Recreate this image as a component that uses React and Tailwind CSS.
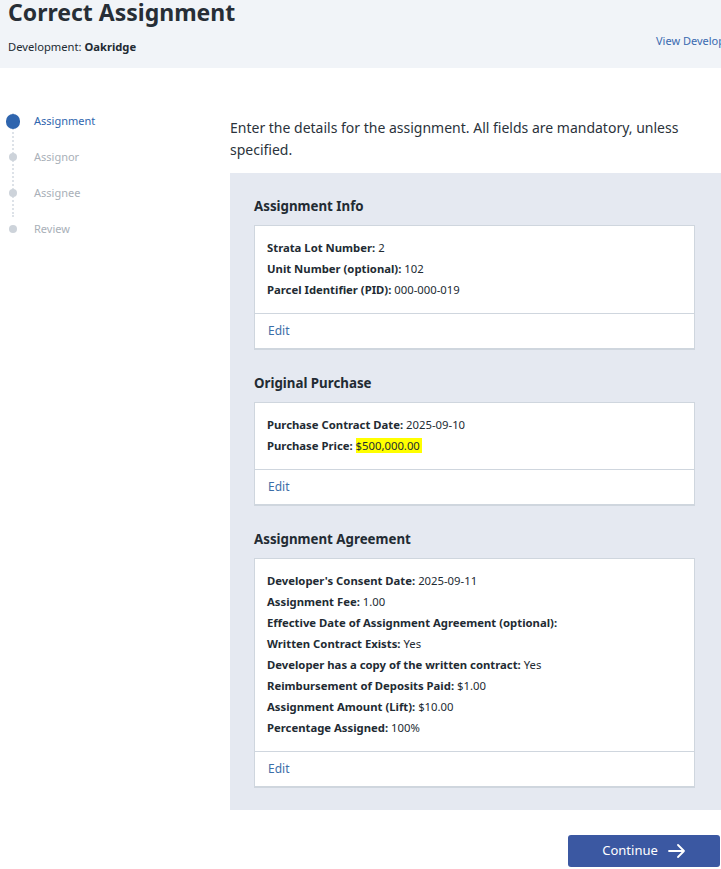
import React from "react";

const Row = ({ label, value, highlight }) => (
  <div className="leading-[21px]">
    <span className="font-bold">{label}</span>
    {value !== undefined && (
      <>
        {" "}
        <span className={highlight ? "bg-[#ffff00] pr-[2px]" : ""}>{value}</span>
      </>
    )}
  </div>
);

const Card = ({ title, rows }) => (
  <div>
    <h3 className="text-[13.3px] font-bold text-[#222b33] leading-[20px] mb-[9px]">{title}</h3>
    <div className="bg-white border border-[#cfd6de] shadow-[0_1px_0_#cfd6de]">
      <div className="px-[12px] pt-[11px] pb-[13px] text-[11.3px] text-[#222b33]">
        {rows.map((r, i) => (
          <Row key={i} {...r} />
        ))}
      </div>
      <div className="border-t border-[#cfd6de] px-[13px] pt-[9px] pb-[9px] text-[12px] leading-[16px] text-[#3d6ea8]">
        Edit
      </div>
    </div>
  </div>
);

export default function App() {
  const steps = ["Assignment", "Assignor", "Assignee", "Review"];
  return (
    <div
      className="w-[721px] h-[869px] overflow-hidden bg-white text-[#222b33]"
      style={{ fontFamily: '"Noto Sans", "Open Sans", sans-serif' }}
    >
      <header className="h-[68px] bg-[#f1f4f8] flex">
        <div className="pl-[8px] w-[656px] shrink-0">
          <h1 className="text-[23px] font-bold leading-[30px] mt-[-3px] text-[#272e36]">Correct Assignment</h1>
          <div className="text-[11.2px] mt-[11px] leading-[18px]">
            Development: <span className="font-bold">Oakridge</span>
          </div>
        </div>
        <a className="shrink-0 whitespace-nowrap text-[11px] text-[#3a6ab0] mt-[33px] leading-[16px]">View Development</a>
      </header>

      <div className="flex">
        <nav className="w-[230px] shrink-0 pt-[35px] pl-[6px]">
          <ol className="relative">
            <div className="absolute left-[6px] top-[10px] h-[104px] border-l-2 border-dotted border-[#dde2e8]" />
            {steps.map((s, i) => (
              <li key={s} className="relative flex items-center h-[36px]">
                <div className="w-[14px] flex justify-center shrink-0">
                  {i === 0 ? (
                    <span className="w-[15px] h-[15px] rounded-full bg-[#2f65ae]" />
                  ) : (
                    <span className="w-[8px] h-[8px] rounded-full bg-[#cdd3da]" />
                  )}
                </div>
                <span className={`ml-[14px] text-[11px] ${i === 0 ? "text-[#2f65ae]" : "text-[#a9b0b8]"}`}>{s}</span>
              </li>
            ))}
          </ol>
        </nav>

        <main className="flex-1 min-w-0 pt-[49px]">
          <p className="text-[14px] leading-[22px] text-[#2b333b] pr-[20px]">
            Enter the details for the assignment. All fields are mandatory, unless specified.
          </p>
          <section className="mt-[12px] bg-[#e5e9f1] pl-[24px] pr-[26px] pt-[23px] pb-[23px] flex flex-col gap-[24px]">
            <Card
              title="Assignment Info"
              rows={[
                { label: "Strata Lot Number:", value: "2" },
                { label: "Unit Number (optional):", value: "102" },
                { label: "Parcel Identifier (PID):", value: "000-000-019" },
              ]}
            />
            <Card
              title="Original Purchase"
              rows={[
                { label: "Purchase Contract Date:", value: "2025-09-10" },
                { label: "Purchase Price:", value: "$500,000.00", highlight: true },
              ]}
            />
            <Card
              title="Assignment Agreement"
              rows={[
                { label: "Developer's Consent Date:", value: "2025-09-11" },
                { label: "Assignment Fee:", value: "1.00" },
                { label: "Effective Date of Assignment Agreement (optional):" },
                { label: "Written Contract Exists:", value: "Yes" },
                { label: "Developer has a copy of the written contract:", value: "Yes" },
                { label: "Reimbursement of Deposits Paid:", value: "$1.00" },
                { label: "Assignment Amount (Lift):", value: "$10.00" },
                { label: "Percentage Assigned:", value: "100%" },
              ]}
            />
          </section>
          <div className="flex justify-end pt-[25px] pr-[1px]">
            <button className="w-[152px] h-[32px] rounded-[3px] bg-[#3b58a2] text-white text-[13px] flex items-center justify-center gap-[10px]">
              Continue
              <svg width="18" height="14" viewBox="0 0 18 14" fill="none" stroke="white" strokeWidth="1.8" strokeLinecap="round" strokeLinejoin="round">
                <path d="M1 7h15M10 1l6 6-6 6" />
              </svg>
            </button>
          </div>
        </main>
      </div>
    </div>
  );
}
